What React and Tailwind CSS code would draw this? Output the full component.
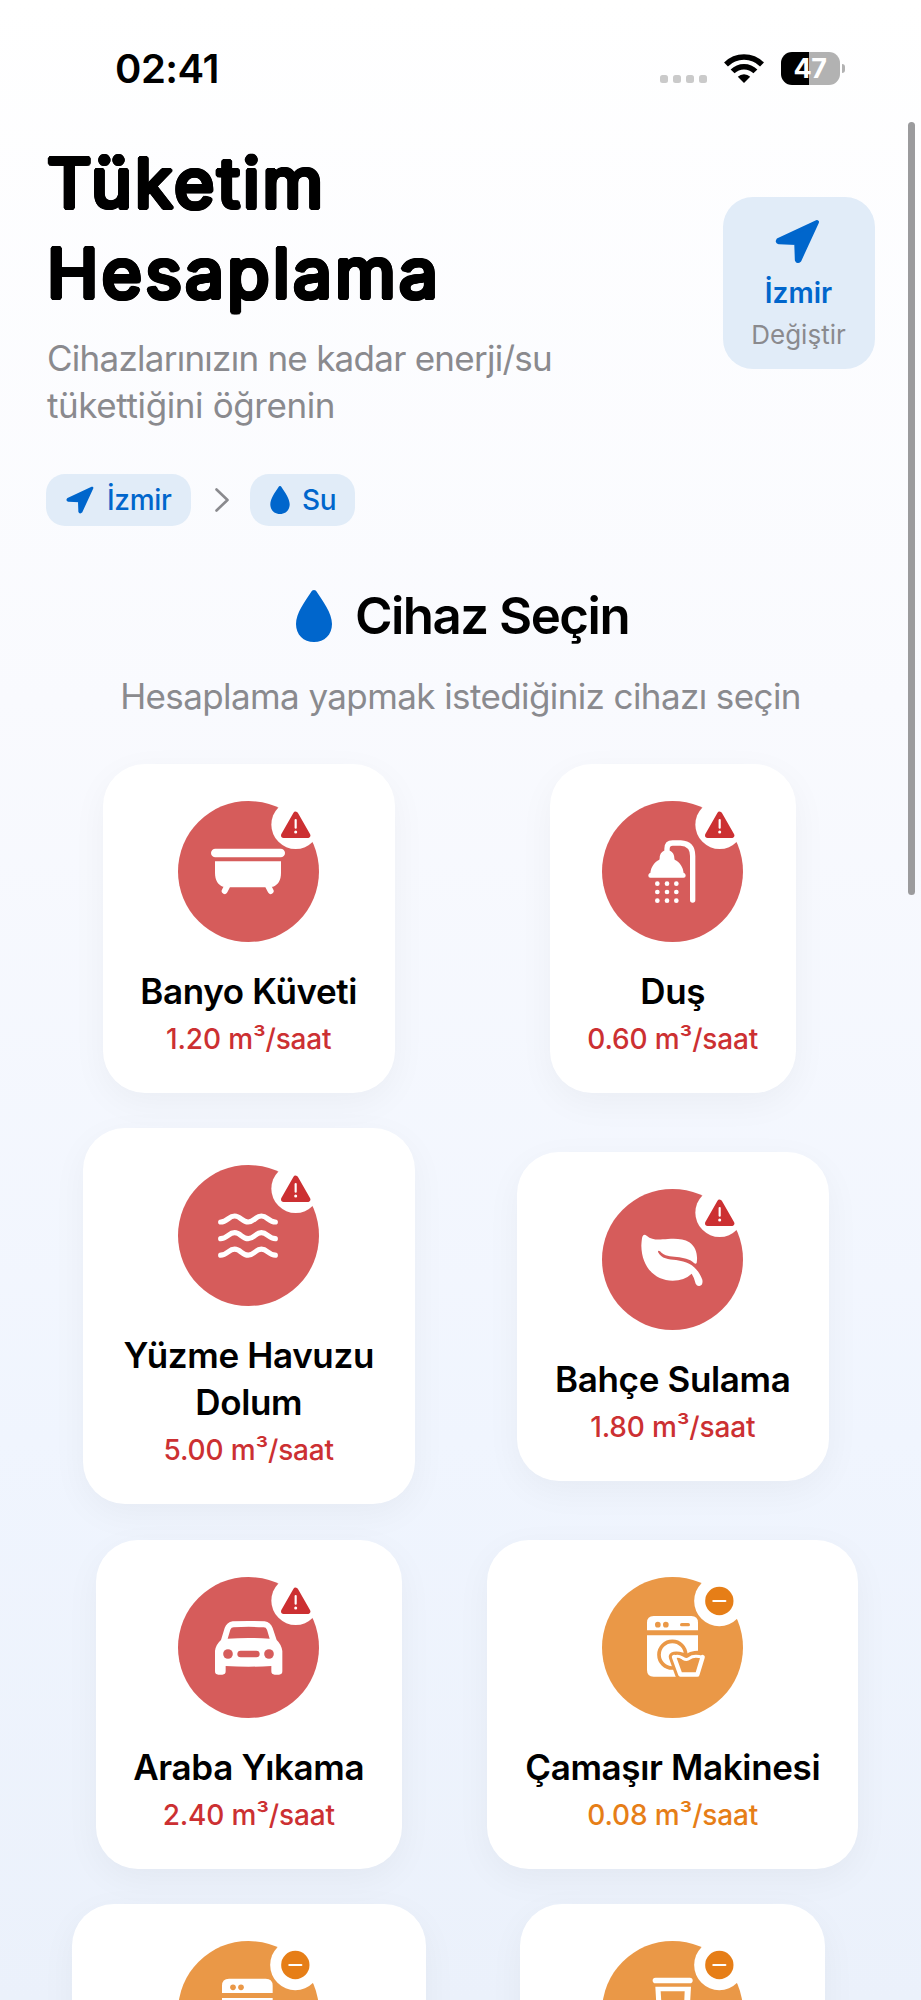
function NavArrow({ className }) {
  return (
    <svg viewBox="0 0 44 44" className={className} aria-hidden="true">
      <path d="M41 3 3.2 20.6Q2 22.3 4 22.8L20.8 23.4 21.4 40Q22.2 42 23.8 40.4Z" fill="#0066cc" stroke="#0066cc" strokeWidth="4" strokeLinejoin="round" />
    </svg>
  );
}

function Drop({ className }) {
  return (
    <svg viewBox="0 0 36 52" className={className} aria-hidden="true">
      <path d="M18 0C19.3 0 20.2.9 21 2.2C27 11.500 36 23 36 34C36 44.800 28.500 52 18 52S0 44.800 0 34C0 23 9 11.500 15 2.200C15.800.9 16.700 0 18 0Z" fill="#0066cc" />
    </svg>
  );
}

function Bath() {
  return (
    <g fill="#fff">
      <rect x="99" y="143" width="222" height="26" rx="13" />
      <path d="M111 181H309V216C309 238 300 252 285 257L264 259H152L135 257C120 252 111 238 111 216Z" />
      <path d="M147 256 140 270M271 256 278 270" stroke="#fff" strokeWidth="18" strokeLinecap="round" />
    </g>
  );
}

function Shower() {
  return (
    <g fill="#fff">
      <path d="M195 156V143Q195 126 212 126H236Q272 128 272 165V297" fill="none" stroke="#fff" strokeWidth="16" strokeLinecap="round" />
      <path d="M173 172C173 157 182 148 195 148S217 157 217 172L218 176C234 184 243 198 245 216C249 217 251 220 251 224Q251 230 245 230H145Q139 230 139 224C139 220 141 217 145 216C147 198 156 184 172 176Z" />
      {[248, 273, 299].map((y) => [166, 195, 223].map((x) => <circle key={`${x}-${y}`} cx={x} cy={y} r="7" />))}
    </g>
  );
}

function Waves() {
  return (
    <g fill="none" stroke="#fff" strokeWidth="15.500" strokeLinecap="round">
      <path d="M128 171C148 171 152 153 170 153S192 171 210.500 171S232 153 250 153S272 171 292 171" />
      <path d="M128 221C148 221 152 203 170 203S192 221 210.500 221S232 203 250 203S272 221 292 221" />
      <path d="M128 270.500C148 270.500 152 252.500 170 252.500S192 270.500 210.500 270.500S232 252.500 250 252.500S272 270.500 292 270.500" />
    </g>
  );
}

function Leaf() {
  return (
    <path
      fill="#fff"
      d="M121 143Q125 134 134 140C148 152 165 153 182 151C205 149 240 145 262 160C282 173 288 200 284 222Q281 227 276 222C262 209 245 207 225 204C205 202 188 203 174 187Q168 182 168 189C178 210 200 211 222 213C262 219 285 232 301 272Q304 288 292 291Q285 292 281 284Q277 266 269 254Q247 275 212 275C160 275 119 235 118 170Q119 150 121 143Z"
    />
  );
}

function Car() {
  return (
    <g>
      <path
        fill="#fff"
        fillRule="evenodd"
        d="M129 189L140 153Q146 136 164 133Q212 131 260 133Q278 136 284 153L296 189Q310 202 313 222V283Q313 293 303 293H290Q280 293 280 283V267Q212 271 143 267V283Q143 293 133 293H121Q111 293 111 283V222Q113 203 129 189ZM149 185Q211 181 275 185L267 158Q264 151 257 151Q212 148 167 151Q160 151 157 158Z"
      />
      <g fill="#d65c5b">
        <circle cx="150" cy="231" r="14.500" />
        <circle cx="273" cy="231" r="14.500" />
        <rect x="178" y="221" width="67" height="20" rx="10" />
      </g>
    </g>
  );
}

function Washer() {
  return (
    <g>
      <path fill="#fff" d="M135 160V137Q135 117 155 117H268Q288 117 288 137V160ZM135 175H288V299H155Q135 299 135 279Z" />
      <g fill="#ea9847">
        <circle cx="167.500" cy="143" r="8.500" />
        <circle cx="191.500" cy="143" r="8.500" />
        <rect x="234" y="138" width="30" height="10" rx="5" />
      </g>
      <circle cx="211" cy="233" r="40" fill="none" stroke="#ea9847" strokeWidth="11" />
      <path d="M216 240 235 292.500H286L302 240C288 233 270 238 260 244S228 233 216 240Z" fill="#ea9847" stroke="#ea9847" strokeWidth="31" strokeLinejoin="round" />
      <path d="M216 240 235 292.500H286L302 240" fill="none" stroke="#fff" strokeWidth="13" strokeLinejoin="round" strokeLinecap="round" />
      <path d="M217 241C228 233 236 240 243 244S256 249 262 244S280 235 302 241" fill="none" stroke="#fff" strokeWidth="9" strokeLinecap="round" />
    </g>
  );
}

function Dishwasher() {
  return (
    <g>
      <path fill="#fff" d="M132 156V134Q132 113 153 113H263Q284 113 284 134V156ZM132 171H284V295H132Z" />
      <circle cx="165" cy="139" r="8.500" fill="#ea9847" />
      <circle cx="189" cy="139" r="8.500" fill="#ea9847" />
    </g>
  );
}

function Cup() {
  return (
    <g>
      <rect x="152" y="110" width="120" height="17" rx="8.500" fill="#fff" />
      <path d="M160 137H267L258 295H169ZM176 151 184 281H243L248 151Z" fill="#fff" fillRule="evenodd" />
    </g>
  );
}

function WarnBadge() {
  return (
    <g>
      <circle cx="353" cy="71" r="73" fill="#fff" />
      <path d="M353 40 389 103H317Z" fill="#cc3032" stroke="#cc3032" strokeWidth="16" strokeLinejoin="round" />
      <path d="M353 57V80" stroke="#fff" strokeWidth="6.500" strokeLinecap="round" />
      <circle cx="353" cy="93" r="4.500" fill="#fff" />
    </g>
  );
}

function MinusBadge() {
  return (
    <g>
      <circle cx="352" cy="72" r="75.500" fill="#fff" />
      <circle cx="352" cy="72" r="42.500" fill="#e67e17" />
      <path d="M334 72H370" stroke="#fff" strokeWidth="6.500" strokeLinecap="round" />
    </g>
  );
}

const devices = [
  { id: "bath", name: "Banyo Küveti", value: "1.20 m³/saat", icon: Bath, high: true, size: "h-[329px] w-[292px]" },
  { id: "shower", name: "Duş", value: "0.60 m³/saat", icon: Shower, high: true, size: "h-[329px] w-[246px]" },
  { id: "pool", name: "Yüzme Havuzu Dolum", value: "5.00 m³/saat", icon: Waves, high: true, size: "h-[376px] w-[332px]" },
  { id: "garden", name: "Bahçe Sulama", value: "1.80 m³/saat", icon: Leaf, high: true, size: "h-[329px] w-[312px]" },
  { id: "car", name: "Araba Yıkama", value: "2.40 m³/saat", icon: Car, high: true, size: "h-[329px] w-[306px]" },
  { id: "washer", name: "Çamaşır Makinesi", value: "0.08 m³/saat", icon: Washer, high: false, size: "h-[329px] w-[371px]" },
  { id: "dishwasher", icon: Dishwasher, high: false, size: "h-[329px] w-[354px]" },
  { id: "cup", icon: Cup, high: false, size: "h-[329px] w-[305px]" },
];

function DeviceCard({ device }) {
  const Icon = device.icon;
  return (
    <button className={`flex flex-col items-center rounded-[42px] bg-white px-[30px] pt-[37px] shadow-[0_10px_36px_rgba(0,0,0,0.045)] ${device.size}`}>
      <svg viewBox="0 0 423 423" className="h-[141px] w-[141px] shrink-0 overflow-visible" aria-hidden="true">
        <circle cx="211.500" cy="211.500" r="211.500" fill={device.high ? "#d65c5b" : "#ea9847"} />
        <Icon />
        {device.high ? <WarnBadge /> : <MinusBadge />}
      </svg>
      {device.name && (
        <>
          <span className="mt-[26px] text-center text-[35px] leading-[47px] font-[560] tracking-[-0.350px] text-black">{device.name}</span>
          <span className={`mt-[7px] text-[28px] leading-[34px] font-medium tracking-[-0.150px] whitespace-nowrap ${device.high ? "text-[#cc3032]" : "text-[#e67e17]"}`}>{device.value}</span>
        </>
      )}
    </button>
  );
}

function StatusBar() {
  return (
    <div className="flex h-[122px] shrink-0 items-start justify-between pr-[76px] pl-[115px]">
      <span className="mt-[45px] text-[40px] leading-[48px] font-semibold tracking-[-0.500px] text-black">02:41</span>
      <div className="mt-[52px] flex h-[33px]">
        <div className="mt-[23px] flex gap-[4.700px]">
          {[0, 1, 2, 3].map((i) => (
            <span key={i} className="h-[8px] w-[8px] rounded-[2.500px] bg-[#cacaca]" />
          ))}
        </div>
        <svg viewBox="0 0 40 29" className="mt-[2px] ml-[17px] h-[29px] w-[40px]" aria-hidden="true">
          <g fill="none" stroke="#000" strokeWidth="5.500">
            <path d="M2 10.500A25.500 25.500 0 0 1 38 10.500" />
            <path d="M8.600 17.400A16 16 0 0 1 31.400 17.400" />
          </g>
          <path d="M20 29 13.800 22.800A8.600 8.600 0 0 1 26.200 22.800Z" fill="#000" />
        </svg>
        <div className="ml-[17px] flex h-[33px] w-[59px] items-center justify-center rounded-[11px] bg-[linear-gradient(90deg,#000_0_28px,#b2b2b2_28px)]">
          <span className="text-[27px] leading-[33px] font-bold tracking-[-0.500px] text-white">47</span>
        </div>
        <span className="mt-[12px] ml-[2px] h-[9px] w-[3.500px] rounded-r-full bg-[#b2b2b2]" />
      </div>
    </div>
  );
}

export default function App() {
  return (
    <div className="relative flex h-[2000px] w-[921px] flex-col overflow-hidden bg-[linear-gradient(180deg,#ffffff_0%,#f9fafe_35%,#f0f5fe_72%,#ebf1fb_100%)] font-['Inter',sans-serif]">
      <StatusBar />
      <header className="flex h-[305px] shrink-0 items-start justify-between pr-[46px] pl-[47px]">
        <div>
          <h1 className="mt-[16px] flex flex-col text-[69px] leading-[90px] font-[400] whitespace-nowrap text-black [text-shadow:2.400px_0_0_#000,2.080px_1.200px_0_#000,1.200px_2.080px_0_#000,0_2.400px_0_#000,-1.200px_2.080px_0_#000,-2.080px_1.200px_0_#000,-2.400px_0_0_#000,-2.080px_-1.200px_0_#000,-1.200px_-2.080px_0_#000,0_-2.400px_0_#000,1.200px_-2.080px_0_#000,2.080px_-1.200px_0_#000]">
            <span className="tracking-[3px]">Tüketim</span>
            <span className="tracking-[3.400px]">Hesaplama</span>
          </h1>
          <p className="mt-[17px] flex flex-col text-[35px] leading-[47px] whitespace-nowrap text-[#8a8a8e]">
            <span className="tracking-[-0.740px]">Cihazlarınızın ne kadar enerji/su</span>
            <span className="tracking-[-0.400px]">tükettiğini öğrenin</span>
          </p>
        </div>
        <button className="mt-[75px] flex h-[172px] w-[152px] flex-col items-center rounded-[30px] bg-[#e1ecf8]">
          <NavArrow className="mt-[22px] mr-[4px] h-[45px] w-[45px]" />
          <span className="mt-[12px] mr-[1px] text-[28px] leading-[34px] font-semibold text-[#0066cc]">İzmir</span>
          <span className="mt-[9px] mr-[1px] text-[26px] leading-[31px] text-[#8a8a8e]">Değiştir</span>
        </button>
      </header>
      <nav className="mt-[47px] flex h-[52px] shrink-0 items-center pl-[46px]">
        <span className="flex h-[52px] w-[145px] items-center rounded-[19px] bg-[#e1ecf8] pl-[20px]">
          <NavArrow className="h-[28px] w-[28px]" />
          <span className="ml-[13px] text-[28px] leading-[34px] font-[450] tracking-[-0.300px] text-[#0066cc]">İzmir</span>
        </span>
        <svg viewBox="0 0 14 24" className="ml-[24px] h-[24px] w-[14px]" aria-hidden="true">
          <path d="M1.500 1.500 12.500 12 1.500 22.500" fill="none" stroke="#8a8a8e" strokeWidth="2.600" strokeLinecap="round" strokeLinejoin="round" />
        </svg>
        <span className="ml-[21px] flex h-[52px] w-[105px] items-center rounded-[19px] bg-[#e1ecf8] pl-[20px]">
          <Drop className="h-[28px] w-[20px]" />
          <span className="ml-[12px] text-[28px] leading-[34px] font-[450] tracking-[-0.300px] text-[#0066cc]">Su</span>
        </span>
      </nav>
      <section className="mt-[59px] flex shrink-0 flex-col items-center">
        <h2 className="flex items-center pl-[4px] text-[51px] leading-[62px] font-semibold tracking-[-1.500px] text-black">
          <Drop className="mr-[23px] h-[52px] w-[36px]" />
          Cihaz Seçin
        </h2>
        <p className="mt-[26px] text-[35px] leading-[46px] tracking-[-0.600px] whitespace-nowrap text-[#8a8a8e]">Hesaplama yapmak istediğiniz cihazı seçin</p>
      </section>
      <main className="mt-[45px] grid shrink-0 grid-cols-2 items-center justify-items-center gap-x-[22.500px] gap-y-[35.300px] pr-[47.500px] pl-[48px]">
        {devices.map((d) => (
          <DeviceCard key={d.id} device={d} />
        ))}
      </main>
      <div className="absolute top-[122px] right-[6px] h-[773px] w-[7px] rounded-full bg-[#9b9b9d]" />
    </div>
  );
}
